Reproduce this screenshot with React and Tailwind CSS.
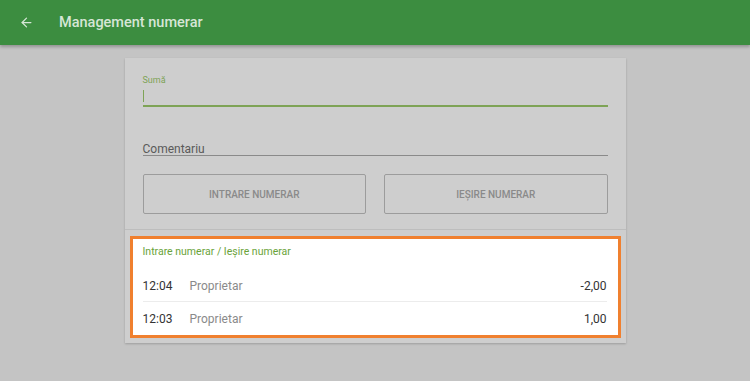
import { ArrowLeft } from "lucide-react";

const rows = [
  { time: "12:04", who: "Proprietar", sum: "-2,00" },
  { time: "12:03", who: "Proprietar", sum: "1,00" },
];

export default function App() {
  return (
    <div
      className="w-[750px] h-[381px] bg-[#c4c4c4] overflow-hidden"
      style={{ fontFamily: "Roboto, 'Liberation Sans', sans-serif" }}
    >
      {/* top bar */}
      <header className="h-[45px] bg-[#3c8d40] flex items-center shadow-[0_2px_3px_rgba(0,0,0,0.25)] relative z-10">
        <ArrowLeft className="ml-[19px] text-[#d6e6d6]" size={15} strokeWidth={2} />
        <h1 className="ml-[25px] text-[14.5px] font-medium text-[#d6e6d6]">Management numerar</h1>
      </header>

      <main className="pt-[13px]">
        <div className="w-[501px] mx-auto bg-[#cecece] shadow-[0_1px_2px_rgba(0,0,0,0.2)]">
          {/* form */}
          <div className="px-[18px] pt-[16px] pb-[15px] border-b border-[#bdbdbd]">
            <label className="block text-[9px] leading-[12px] text-[#7ea356]">Sumă</label>
            <div className="h-[21px] border-b-2 border-[#7ea356] flex items-center">
              <span className="w-px h-[12px] bg-[#7ea356]" />
            </div>
            <div className="mt-[34px] border-b border-[#8a8a8a] h-[15px] text-[12px] leading-[17px] text-[#5a5a5a]">
              Comentariu
            </div>
            <div className="mt-[18px] grid grid-cols-2 gap-[18px]">
              <button className="h-[40px] border border-[#9c9c9c] rounded-[2px] text-[10px] font-medium text-[#8a8a8a]">
                INTRARE NUMERAR
              </button>
              <button className="h-[40px] border border-[#9c9c9c] rounded-[2px] text-[10px] font-medium text-[#8a8a8a]">
                IEȘIRE NUMERAR
              </button>
            </div>
          </div>

          {/* list */}
          <div className="px-[5px] pt-[6px] pb-[5px]">
            <div className="bg-white border-[3px] border-[#f0802f]">
              <div className="px-[10px] pt-[6px] h-[30px] text-[10.5px] leading-[14px] text-[#6aa33a]">
                Intrare numerar / Ieșire numerar
              </div>
              <div className="ml-[10px] mr-[11px]">
                {rows.map((r, i) => (
                  <div
                    key={i}
                    className={
                      "flex items-center text-[12px] " +
                      (i === 0 ? "h-[33px] pt-[2px] border-b border-[#ececec]" : "h-[33px]")
                    }
                  >
                    <span className="w-[47px] text-[#333]">{r.time}</span>
                    <span className="text-[#8a8a8a]">{r.who}</span>
                    <span className="ml-auto text-[#333]">{r.sum}</span>
                  </div>
                ))}
              </div>
            </div>
          </div>
        </div>
      </main>
    </div>
  );
}
